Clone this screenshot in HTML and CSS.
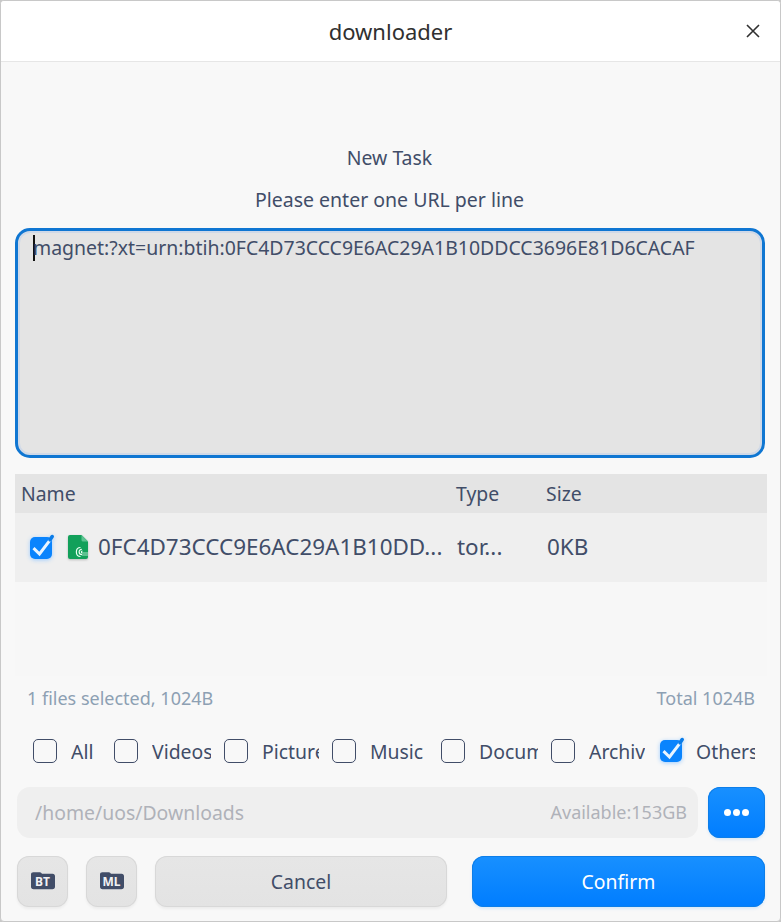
FILE: index.html
```html
<!DOCTYPE html>
<html lang="en">
<head>
<meta charset="utf-8">
<title>downloader</title>
<link rel="stylesheet" href="styles.css">
</head>
<body>
<svg class="defs" width="0" height="0" aria-hidden="true">
  <symbol id="checked" viewBox="0 0 28 28">
    <rect x="2" y="4" width="22" height="22" rx="5" fill="#0a84fd"/>
    <path d="M5.500 15.200l6 5.800L22.200 6.800" fill="none" stroke="#e9f5ff" stroke-width="3"/>
    <path d="M22 6.800l2.200-3.200" fill="none" stroke="#0a7ce8" stroke-width="3.600" stroke-linecap="round"/>
  </symbol>
  <symbol id="folder" viewBox="0 0 24 18">
    <path d="M0 2.600C0 1 .9.2 2.400.2h6c1 0 1.500.3 2 .9l.5.6h10.700c1.500 0 2.400.9 2.400 2.400v10.500c0 1.700-.9 2.700-2.600 2.700H2.600C.9 17.300 0 16.300 0 14.600z" fill="#414d68"/>
  </symbol>
</svg>
<div class="window">
  <header class="titlebar">
    <h1>downloader</h1>
    <button class="close" aria-label="Close"><svg width="14" height="14" viewBox="0 0 14 14"><path d="M1 1l12 12M13 1L1 13" stroke="#303030" stroke-width="1.600" fill="none"/></svg></button>
  </header>
  <main>
    <h2>New Task</h2>
    <p class="hint">Please enter one URL per line</p>
    <div class="editor"><span class="caret"></span>magnet:?xt=urn:btih:0FC4D73CCC9E6AC29A1B10DDCC3696E81D6CACAF</div>
    <section class="files">
      <div class="row head"><span>Name</span><span>Type</span><span>Size</span></div>
      <div class="row item">
        <span class="name">
          <svg class="check" width="28" height="28"><use href="#checked"/></svg>
          <svg class="doc" width="22" height="26" viewBox="0 0 22 26">
            <path d="M3 1h11.500L21 7.500V23a2 2 0 0 1-2 2H3a2 2 0 0 1-2-2V3a2 2 0 0 1 2-2z" fill="#12a05a"/>
            <path d="M14.500 1L21 7.500h-5a1.500 1.500 0 0 1-1.500-1.500z" fill="#5cc391"/>
            <g fill="none" stroke="#eafff3" stroke-width="1.200"><path d="M13.500 13.500c-5.500 0-5.500 9 0 9"/><path d="M14.800 15.300c-3.600 0-3.600 5.400.2 5.400"/><path d="M15.500 17c-1.600 0-1.400 2 0 2"/><path d="M15.500 19H21M15 21h6" stroke-width=".7"/></g>
          </svg>
          <span>0FC4D73CCC9E6AC29A1B10DD...</span>
        </span>
        <span class="type">tor...</span><span class="size">0KB</span>
      </div>
    </section>
    <div class="summary"><span>1 files selected, 1024B</span><span>Total 1024B</span></div>
    <div class="filters">
      <label><i class="box"></i><span>All</span></label>
      <label><i class="box"></i><span>Videos</span></label>
      <label><i class="box"></i><span class="pictures">Pictures</span></label>
      <label><i class="box"></i><span>Music</span></label>
      <label><i class="box"></i><span>Documents</span></label>
      <label><i class="box"></i><span class="archive">Archive</span></label>
      <label><svg class="tick" width="28" height="28"><use href="#checked"/></svg><span>Others</span></label>
    </div>
    <div class="location">
      <div class="path"><span>/home/uos/Downloads</span><span class="free">Available:153GB</span></div>
      <button class="blue more" aria-label="Browse"><i></i><i></i><i></i></button>
    </div>
    <footer>
      <button class="grey square"><svg width="24" height="18"><use href="#folder"/></svg><b>BT</b></button>
      <button class="grey square"><svg width="24" height="18"><use href="#folder"/></svg><b>ML</b></button>
      <button class="grey cancel">Cancel</button>
      <button class="blue confirm">Confirm</button>
    </footer>
  </main>
</div>
</body>
</html>
```
FILE: styles.css
```css
* { box-sizing: border-box; }
body {
  margin: 0;
  background: #c8c8c8;
  color: #414d68;
  font: 19.4px/26px "Noto Sans", sans-serif;
}
h1, h2, p { margin: 0; font-weight: 400; }
button { padding: 0; border: 0; color: inherit; font: inherit; }
.defs { display: block; position: absolute; }
.window {
  width: 781px;
  height: 922px;
  border: 1px solid #c8c8c8;
  border-radius: 4px;
  background: #f8f8f8;
  overflow: hidden;
}
.titlebar {
  display: grid;
  grid-template-columns: 56px 1fr 56px;
  align-items: center;
  height: 61px;
  border-bottom: 1px solid #e6e6e6;
  background: #fff;
}
h1 {
  grid-column: 2;
  color: #303030;
  font-size: 22px;
  line-height: 30px;
  text-align: center;
}
.close { display: flex; justify-content: center; padding-left: 1px; background: none; }
main { padding: 83px 14px 0; }
h2 { padding-right: 2px; font-size: 19.4px; text-align: center; }
.hint { margin-top: 16px; padding-right: 2px; font-size: 19.500px; text-align: center; }
.editor {
  display: flex;
  height: 230px;
  margin: 15px 1px 0 0;
  padding: 4px 15px;
  border: 3px solid #0f76d2;
  border-radius: 15px;
  background: #e4e4e4;
  box-shadow: inset 0 0 0 2px #cfd9e8;
  font-size: 19.470px;
}
.caret { width: 2px; height: 26px; margin-right: -2px; background: #111; }
.files { width: 752px; height: 202px; margin-top: 16px; background: #f7f7f7; }
.row { display: grid; grid-template-columns: 435px 90px 1fr; align-items: center; }
.head { height: 39px; padding-left: 6px; background: #e4e4e4; }
.item { height: 69px; padding: 0 0 2px 7px; background: #efefef; font-size: 22.450px; line-height: 30px; }
.name { display: flex; align-items: center; }
.check { margin-left: 6px; filter: drop-shadow(0 1px 2px #9dccff); }
.doc { margin: 0 9px 0 11px; filter: drop-shadow(0 1px 1px #bbb); }
.summary {
  display: flex;
  justify-content: space-between;
  margin-top: 9px;
  padding: 0 11px 0 12px;
  color: #8da0b3;
  font-size: 18px;
}
.filters {
  display: grid;
  grid-template-columns: 81px 110px 108px 109px 110px 108px 96px;
  height: 28px;
  margin: 26px 0 0 18px;
}
label { display: flex; align-items: center; }
.box {
  flex: none;
  width: 24px;
  height: 24px;
  margin-right: 14px;
  border: 1.500px solid #414d68;
  border-radius: 5px;
}
label span { width: 59px; padding-top: 2px; overflow: hidden; white-space: nowrap; }
label .pictures { width: 57px; }
label .archive { width: 56px; }
.tick { flex: none; margin: -2px 10px 0 -1px; filter: drop-shadow(0 1px 2px #9dccff); }
.location { display: flex; justify-content: space-between; margin: 22px 1px 0 2px; }
.path {
  display: flex;
  align-items: center;
  justify-content: space-between;
  width: 681px;
  height: 51px;
  padding: 0 11px 0 18px;
  border-radius: 13px;
  background: #efefef;
  color: #afb2b9;
}
.free { margin-top: -1px; font-size: 18px; }
.blue {
  border-radius: 12px;
  background: linear-gradient(#1890ff, #007dff);
  box-shadow: inset 0 0 0 1px #0d7ee8, 0 2px 3px #0080ff1f;
  color: #fff;
}
.more { display: flex; align-items: center; justify-content: center; gap: 2px; width: 57px; height: 51px; }
.more i { width: 7px; height: 7px; border-radius: 50%; background: #fff; }
footer { display: flex; height: 51px; margin: 18px 1px 0 2px; }
.grey {
  border-radius: 12px;
  background: linear-gradient(#e6e6e6, #e3e3e3);
  box-shadow: inset 0 0 0 1px #d8d8d8, 0 2px 3px #0000000d;
}
.square { display: grid; place-items: center; width: 51px; margin-right: 18px; padding-bottom: 2px; }
.square svg, .square b { grid-area: 1 / 1; }
.square b { padding-top: 2px; color: #f1f1f4; font: 700 12px/14px "Noto Sans", sans-serif; }
.cancel { width: 292px; }
.confirm { width: 293px; margin-left: auto; }
```
